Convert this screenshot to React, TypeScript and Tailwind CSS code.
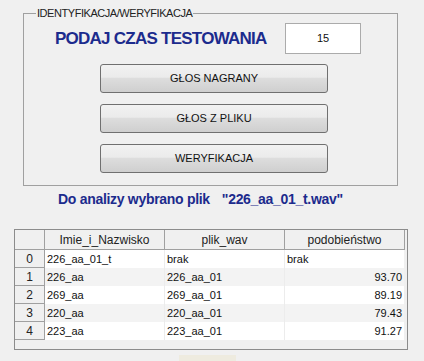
export default function App() {
    const rows = [
        { id: 0, name: "226_aa_01_t", file: "brak", score: "brak" },
        { id: 1, name: "226_aa", file: "226_aa_01", score: "93.70" },
        { id: 2, name: "269_aa", file: "269_aa_01", score: "89.19" },
        { id: 3, name: "220_aa", file: "220_aa_01", score: "79.43" },
        { id: 4, name: "223_aa", file: "223_aa_01", score: "91.27" },
    ]
    const buttons = ["GŁOS NAGRANY", "GŁOS Z PLIKU", "WERYFIKACJA"]

    return (
        <div className="w-[424px] h-[361px] overflow-hidden bg-[#f0f0f0] pt-[13px] font-['Liberation_Sans',Arial,sans-serif] text-[#111]">
            {/* group box */}
            <div className="relative ml-[23px] w-[375px] h-[173px] border border-[#a0a0a0]">
                <span className="absolute left-[12px] -top-[7px] px-[1px] bg-[#f0f0f0] text-[11px] leading-[13px] tracking-[-0.45px] text-[#222]">
                    IDENTYFIKACJA/WERYFIKACJA
                </span>
                <div className="flex items-center pt-[9px]">
                    <span className="ml-[31px] w-[230px] whitespace-nowrap text-[17px] font-bold tracking-[-0.75px] text-[#1c2b8d]">
                        PODAJ CZAS TESTOWANIA
                    </span>
                    <div className="w-[76px] h-[31px] bg-white border border-[#ababab] flex items-center justify-center text-[11px]">
                        15
                    </div>
                </div>
                <div className="flex flex-col gap-[11px] mt-[10px] ml-[76px]">
                    {buttons.map((b) => (
                        <div
                            key={b}
                            className="w-[228px] h-[29px] rounded-[3px] border border-[#707070] bg-[linear-gradient(#f2f2f2_0%,#ebebeb_45%,#dddddd_50%,#cfcfcf_100%)] flex items-center justify-center text-[11px] text-[#111]"
                        >
                            {b}
                        </div>
                    ))}
                </div>
            </div>

            <div className="flex mt-[5px] ml-[58px] text-[14px] leading-[17px] font-bold tracking-[-0.3px] text-[#1c2b8d]">
                <span>Do analizy wybrano plik</span>
                <span className="ml-[12px]">"226_aa_01_t.wav"</span>
            </div>

            {/* table */}
            <div className="mt-[21px] ml-[14px] w-[394px] h-[121px] border border-[#8c8c8c] bg-[#f0f0f0] text-[11px]">
                <div className="flex h-[20px] text-[12px] text-[#222]">
                    <div className="w-[30px] border-r border-b border-[#a0a0a0]" />
                    {["Imie_i_Nazwisko", "plik_wav", "podobieństwo"].map((h) => (
                        <div key={h} className="w-[120px] border-r border-b border-[#a0a0a0] flex items-center justify-center">
                            {h}
                        </div>
                    ))}
                </div>
                {rows.map((r, i) => (
                    <div key={r.id} className={`flex h-[18px] ${i % 2 ? "bg-[#f3f3f3]" : "bg-white"} w-[389px]`}>
                        <div className="w-[30px] bg-[#f0f0f0] border-r border-b border-[#a0a0a0] flex items-center justify-center text-[12px] text-[#222]">
                            {r.id}
                        </div>
                        <div className="w-[120px] pl-[2px] flex items-center border-r border-[#ececec]">{r.name}</div>
                        <div className="w-[120px] pl-[2px] flex items-center border-r border-[#ececec]">{r.file}</div>
                        <div className={`w-[119px] px-[2px] flex items-center ${r.id === 0 ? "justify-start" : "justify-end"}`}>
                            {r.score}
                        </div>
                    </div>
                ))}
            </div>

            <div className="mt-[5px] ml-[179px] w-[57px] h-[6px] bg-[#eeebdf]" />
        </div>
    )
}
